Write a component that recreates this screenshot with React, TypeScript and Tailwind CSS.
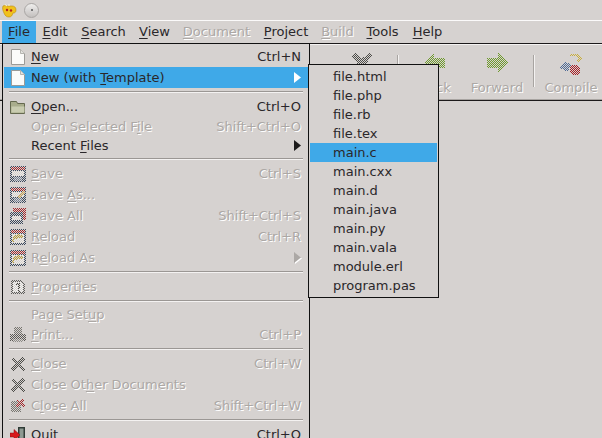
import type { ReactNode } from "react";

const FONT = "font-['DejaVu_Sans',sans-serif] text-[13px]";
const OFF = "text-[#aca8a5] [text-shadow:1px_1px_0_#ffffff]";

// "_" marks the mnemonic letter
function Label({ text }: { text: string }) {
  const i = text.indexOf("_");
  if (i < 0) return <>{text}</>;
  return (
    <>
      {text.slice(0, i)}
      <span className="underline decoration-1 underline-offset-2">{text[i + 1]}</span>
      {text.slice(i + 2)}
    </>
  );
}

function Dim({ children, size = 16 }: { children: ReactNode; size?: number }) {
  return (
    <svg width={size} height={size} viewBox={`0 0 ${size} ${size}`} shapeRendering="crispEdges">
      <defs>
        <pattern id="dither" width="2" height="2" patternUnits="userSpaceOnUse">
          <rect x="0" y="0" width="1" height="1" fill="#d6d2d0" />
          <rect x="1" y="1" width="1" height="1" fill="#d6d2d0" />
        </pattern>
      </defs>
      {children}
      <rect width={size} height={size} fill="url(#dither)" />
    </svg>
  );
}

const PageIcon = () => (
  <svg width="16" height="16" viewBox="0 0 16 16">
    <path d="M1.5 0.5h9l4 4v11h-13z" fill="#fbfbfa" stroke="#9b9a97" />
    <path d="M10.5 0.5v4h4" fill="#e4e3e0" stroke="#b5b4b0" />
  </svg>
);

const FolderIcon = () => (
  <svg width="16" height="16" viewBox="0 0 16 16">
    <path d="M0.5 2.5h6l1 2h7v10h-14z" fill="#a9ad8c" stroke="#65694f" />
    <path d="M1.5 7.5h13v6h-13z" fill="#c9ccb0" />
  </svg>
);

const SaveIcon = ({ pencil }: { pencil?: boolean }) => (
  <Dim>
    <rect x="0" y="0" width="16" height="16" fill="#39485c" />
    <rect x="1" y="1" width="14" height="3" fill="#a3262a" />
    <rect x="2" y="5" width="12" height="5" fill="#ece9e4" />
    <rect x="4" y="11" width="8" height="4" fill="#6f7f94" />
    {pencil && <path d="M7 10l6-6 2 2-6 6z" fill="#c9a14a" />}
  </Dim>
);

const SaveAllIcon = () => (
  <Dim>
    <rect x="3" y="0" width="13" height="12" fill="#a3262a" />
    <rect x="0" y="4" width="13" height="12" fill="#39485c" />
    <rect x="2" y="8" width="9" height="4" fill="#ece9e4" />
  </Dim>
);

const ReloadIcon = () => (
  <Dim>
    <rect x="0" y="0" width="16" height="16" fill="#39485c" />
    <rect x="1" y="1" width="14" height="3" fill="#a3262a" />
    <rect x="2" y="5" width="12" height="9" fill="#ece9e4" />
    <path d="M2 13c0-5 4-8 7-8l-1-1 6 4-6 2 1-1c-3 0-5 2-5 4z" fill="#b89c32" />
  </Dim>
);

const PropertiesIcon = () => (
  <Dim>
    <path d="M1 1h10l4 4v10H1z" fill="#5d5d5a" />
    <path d="M3 3h7l3 3v7H3z" fill="#f2f2ef" />
    <path d="M6 4h4v6H8V6H6z" fill="#45453f" />
    <rect x="8" y="11" width="2" height="2" fill="#45453f" />
  </Dim>
);

const PrintIcon = () => (
  <Dim>
    <rect x="4" y="0" width="8" height="7" fill="#77756f" />
    <rect x="0" y="7" width="16" height="7" fill="#5a5854" />
    <rect x="3" y="12" width="10" height="3" fill="#8d8b86" />
  </Dim>
);

const CrossIcon = ({ size = 16 }: { size?: number }) => (
  <Dim size={size}>
    <g transform={`scale(${size / 16})`}>
      <path d="M3 1l5 4 5-4 2 2-4 5 4 5-2 2-5-4-5 4-2-2 4-5-4-5z" fill="#4c4c48" />
    </g>
  </Dim>
);

const CloseAllIcon = () => (
  <Dim>
    <rect x="1" y="3" width="10" height="11" fill="#77756f" />
    <path d="M7 1l3 2 3-2 2 2-3 2 3 3-2 2-3-3-3 2-1-1 2-3-2-2z" fill="#a3262a" />
  </Dim>
);

const QuitIcon = () => (
  <svg width="16" height="16" viewBox="0 0 16 16">
    <rect x="8" y="0" width="7" height="16" fill="#2f3b36" />
    <rect x="9.5" y="1.5" width="4" height="13" fill="#8d9a92" />
    <path d="M0 6h4V2.5L10 8l-6 5.5V10H0z" fill="#d8191c" stroke="#8a0f10" strokeWidth="0.5" />
  </svg>
);

const ArrowRight = ({ color }: { color: string }) => (
  <svg width="7" height="11" viewBox="0 0 7 11">
    <path d="M0 0l7 5.5L0 11z" fill={color} />
  </svg>
);

type Row =
  | { sep: true; line?: never }
  | {
      sep?: false;
      label: string;
      keys?: string;
      icon?: ReactNode;
      off?: boolean;
      sub?: boolean;
      active?: boolean;
      h?: string;
    };

const fileMenu: Row[] = [
  { label: "_New", keys: "Ctrl+N", icon: <PageIcon />, h: "h-[21px]" },
  { label: "New (with _Template)", icon: <PageIcon />, sub: true, active: true, h: "h-[21px]" },
  { sep: true },
  { label: "_Open...", keys: "Ctrl+O", icon: <FolderIcon />, h: "h-[21px]" },
  { label: "Open Selected F_ile", keys: "Shift+Ctrl+O", off: true, h: "h-[19px]" },
  { label: "Recent _Files", sub: true, h: "h-[19px]" },
  { sep: true },
  { label: "_Save", keys: "Ctrl+S", icon: <SaveIcon />, off: true, h: "h-[21px]" },
  { label: "Save _As...", icon: <SaveIcon pencil />, off: true, h: "h-[21px]" },
  { label: "Save All", keys: "Shift+Ctrl+S", icon: <SaveAllIcon />, off: true, h: "h-[21px]" },
  { label: "_Reload", keys: "Ctrl+R", icon: <ReloadIcon />, off: true, h: "h-[21px]" },
  { label: "R_eload As", icon: <ReloadIcon />, sub: true, off: true, h: "h-[21px]" },
  { sep: true },
  { label: "_Properties", icon: <PropertiesIcon />, off: true, h: "h-[21px]" },
  { sep: true },
  { label: "Page Set_up", off: true, h: "h-[19px]" },
  { label: "_Print...", keys: "Ctrl+P", icon: <PrintIcon />, off: true, h: "h-[21px]" },
  { sep: true },
  { label: "_Close", keys: "Ctrl+W", icon: <CrossIcon />, off: true, h: "h-[21px]" },
  { label: "Close Ot_her Documents", icon: <CrossIcon />, off: true, h: "h-[21px]" },
  { label: "C_lose All", keys: "Shift+Ctrl+W", icon: <CloseAllIcon />, off: true, h: "h-[21px]" },
  { sep: true },
  { label: "_Quit", keys: "Ctrl+Q", icon: <QuitIcon />, h: "h-[21px]" },
];

const templates = [
  "file.html",
  "file.php",
  "file.rb",
  "file.tex",
  "main.c",
  "main.cxx",
  "main.d",
  "main.java",
  "main.py",
  "main.vala",
  "module.erl",
  "program.pas",
];

const menuBar = [
  { label: "_File", w: "w-[34px]", active: true },
  { label: "_Edit", w: "w-[38px]" },
  { label: "_Search", w: "w-[59px]" },
  { label: "_View", w: "w-[43px]" },
  { label: "_Document", w: "w-[81px]", off: true },
  { label: "_Project", w: "w-[58px]" },
  { label: "_Build", w: "w-[45px]", off: true },
  { label: "_Tools", w: "w-[45px]" },
  { label: "_Help", w: "w-[45px]" },
];

function ToolButton({ label, w, children }: { label: string; w: string; children: ReactNode }) {
  return (
    <div className={`flex flex-col items-center pt-[7px] ${w}`}>
      <div className="h-[24px] w-[24px]">{children}</div>
      <span className={`mt-[3px] ${OFF}`}>{label}</span>
    </div>
  );
}

function ToolSep() {
  return (
    <div className="flex h-full w-[12px] items-start justify-center pt-[11px]">
      <div className="h-[32px] w-px bg-[#f4f2f1] shadow-[-1px_0_0_#a8a4a1]" />
    </div>
  );
}

const GreenArrow = ({ flip }: { flip?: boolean }) => (
  <Dim size={24}>
    <path
      d={flip ? "M1 12L11 2v5h11v10H11v5z" : "M23 12L13 2v5H2v10h11v5z"}
      fill="#6f9a2c"
    />
  </Dim>
);

const CompileIcon = () => (
  <Dim size={24}>
    <path d="M1 17l5-7 6 4-3 7z" fill="#4d6a96" />
    <circle cx="16" cy="19" r="5.5" fill="#a81e24" />
    <path d="M11 3h8l4 4-4 5-2-3 2-2-2-2h-6z" fill="#c9ae3a" />
  </Dim>
);

export default function App() {
  return (
    <div className={`relative h-[438px] w-[602px] overflow-hidden bg-[#d6d2d0] text-[#2a272a] ${FONT}`}>
      {/* title bar */}
      <div className="flex h-[20px] items-center gap-[7px] pl-[2px]">
        <svg width="15" height="15" viewBox="0 0 15 15">
          <path d="M1 3c2-1 4 0 4 0h5c2 0 4 1 4 4s-2 3-3 3c-1 3-2 4-4 4s-4-1-5-4C1 8 0 5 1 3z" fill="#f0c11c" stroke="#b98c10" strokeWidth="0.6" />
          <circle cx="5" cy="7" r="1.2" fill="#b3261e" />
          <circle cx="9" cy="7.5" r="1.2" fill="#b3261e" />
          <path d="M3 1.5l2 1.5M7 1l0 2" stroke="#f8f2d0" />
        </svg>
        <div className="flex h-[15px] w-[15px] items-center justify-center rounded-full border border-[#a9a6a4] bg-gradient-to-b from-[#efeeed] to-[#c3c0be]">
          <div className="h-[2px] w-[2px] rounded-full bg-[#555]" />
        </div>
      </div>
      <div className="h-px bg-[#fbfafa]" />

      {/* menu bar */}
      <div className="flex h-[22px] pl-[2px]">
        {menuBar.map((m) => (
          <div
            key={m.label}
            className={`flex items-center justify-center ${m.w} ${m.active ? "bg-[#3fa9e8]" : ""} ${m.off ? OFF : ""}`}
          >
            <span><Label text={m.label} /></span>
          </div>
        ))}
      </div>

      {/* toolbar */}
      <div className="flex h-[58px] border-y border-y-[#1c1a1a] pl-[332px] shadow-[inset_0_1px_0_#f4f2f1,inset_0_-1px_0_#a8a4a1]">
        <ToolButton label="Close" w="w-[60px]"><CrossIcon size={24} /></ToolButton>
        <ToolSep />
        <ToolButton label="Back" w="w-[62px]"><GreenArrow flip /></ToolButton>
        <ToolButton label="Forward" w="w-[62px]"><GreenArrow /></ToolButton>
        <ToolSep />
        <ToolButton label="Compile" w="w-[62px]"><CompileIcon /></ToolButton>
      </div>

      {/* file menu */}
      <div className="absolute left-[2px] top-[43px] w-[308px] border border-[#111] bg-[#d6d2d0] px-[1px] pt-[2px]">
        {fileMenu.map((row, i) =>
          row.sep ? (
            <div key={i} className="flex h-[8px] items-start px-[5px] pt-[3px]">
              <div className="h-[2px] w-full border-t border-t-[#9b9794] border-b border-b-[#f4f2f1]" />
            </div>
          ) : (
            <div
              key={i}
              className={`flex items-center pl-[6px] pr-[7px] ${row.h} ${row.active ? "bg-[#3fa9e8]" : ""} ${row.off ? OFF : ""}`}
            >
              <div className="mr-[5px] h-[16px] w-[16px] shrink-0">{row.icon}</div>
              <span><Label text={row.label} /></span>
              <span className="ml-auto">{row.keys}</span>
              {row.sub && (
                <div className={row.off ? "[filter:drop-shadow(1px_1px_0_#ffffff)]" : ""}>
                  <ArrowRight color={row.active ? "#ffffff" : row.off ? "#aca8a5" : "#1c1a1a"} />
                </div>
              )}
            </div>
          )
        )}
      </div>

      {/* template submenu */}
      <div className="absolute left-[308px] top-[64px] h-[234px] w-[131px] border border-[#111] bg-[#d6d2d0] px-[1px] pt-[2px]">
        {templates.map((name) => (
          <div
            key={name}
            className={`flex h-[19px] items-center pl-[23px] ${name === "main.c" ? "bg-[#3fa9e8]" : ""}`}
          >
            {name}
          </div>
        ))}
      </div>
    </div>
  );
}
